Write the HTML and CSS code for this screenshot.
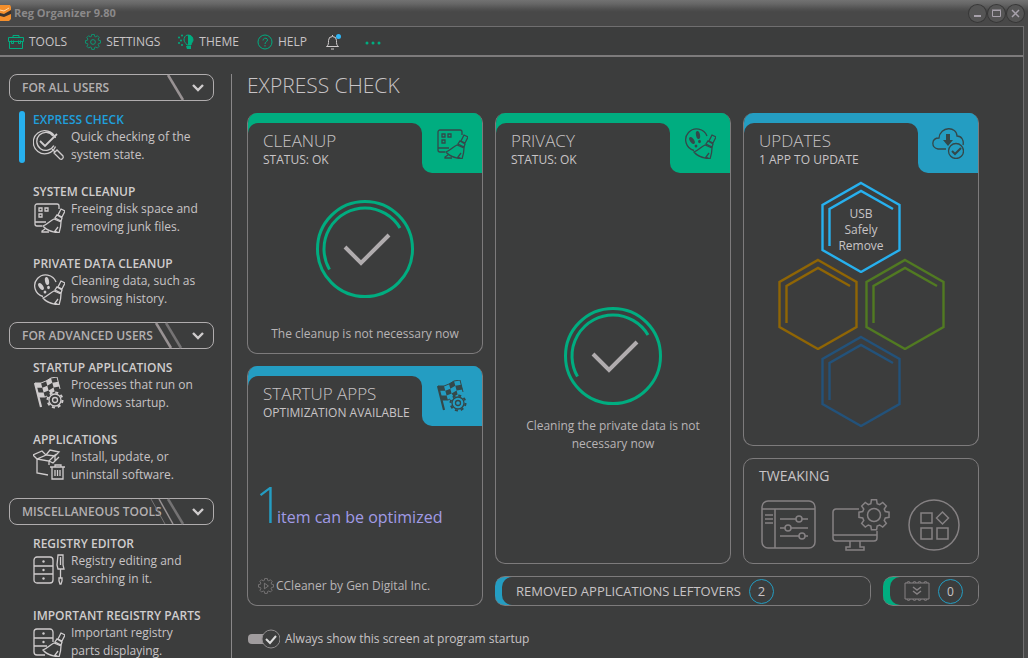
FILE: index.html
```html
<!DOCTYPE html>
<html lang="en">

<head>
    <meta charset="UTF-8">
    <meta name="viewport" content="width=device-width, initial-scale=1.0">
    <title>Reg Organizer 9.80</title>
    <link rel="stylesheet" href="styles.css">
</head>

<body>
    <!-- shared icons -->
    <svg class="sprite" aria-hidden="true">
        <symbol id="broom" viewBox="0 0 32 32">
            <path d="M28 8l4 2-3 6-4-2zM24 14l5 3-1 3-6-3z" />
            <path d="M21 18c-3 1-6 5-11 7 3 4 9 6 16 7 1-3 2-6 2-11zM25 26l-3 4 4 2" />
        </symbol>
        <symbol id="icon-cleanup" viewBox="0 0 32 32">
            <path d="M26 8V5a2 2 0 0 0-2-2H4a2 2 0 0 0-2 2v18a2 2 0 0 0 2 2h5M2 21h11M12 28l-3 2v1h7" />
            <path d="M6 7h3v3H6zM12 7h3v3h-3zM6 13h3v3H6z" />
            <use href="#broom" />
        </symbol>
        <symbol id="icon-privacy" viewBox="0 0 32 32">
            <path d="M23 9A11 11 0 1 0 10 23.500" />
            <g class="fill">
                <ellipse cx="14" cy="8" rx="2" ry="4" transform="rotate(-12 14 8)" />
                <ellipse cx="15.500" cy="14.500" rx="1.400" ry="1.800" />
                <ellipse cx="8" cy="13.500" rx="2" ry="4" transform="rotate(-35 8 13.500)" />
                <ellipse cx="12" cy="19" rx="1.400" ry="1.600" />
            </g>
            <use href="#broom" />
        </symbol>
        <symbol id="gear" viewBox="0 0 20 20">
            <path d="M8.300 1h3.400l.4 2.500 1.700.7 2-1.500 2.400 2.400-1.400 2 .7 1.700 2.500.4v3.400l-2.500.4-.7 1.700 1.400 2-2.400 2.400-2-1.400-1.700.7-.4 2.500H8.300l-.4-2.500-1.700-.7-2 1.400-2.400-2.400 1.400-2-.7-1.700L0 12.600V9.200l2.500-.4.7-1.700-1.400-2 2.400-2.400 2 1.500 1.700-.7z" transform="translate(.6 -.4) scale(.94)" />
        </symbol>
        <symbol id="icon-startup" viewBox="0 0 32 32">
            <path d="M2 6l6 24" stroke-width="2.200" />
            <path d="M2 6h6l5-2 5-3 6-1 3 12M6 20h6l2-1" stroke-width="1" />
            <g class="fill">
                <path d="M2 6h6l1.300 4.700h-6zM13 4l5-3 1.300 4.700-5 3zM9.300 10.700l5-2 1.300 4.700-5 2zM19.300 5.700l6-1 1.300 4.700-6 1zM4.600 15.400h6l1.300 4.600H6zM15.600 13.400l5-3 1 4-4 2z" />
            </g>
            <circle cx="22" cy="23" r="6" />
            <circle cx="22" cy="23" r="7.500" stroke-width="2" stroke-dasharray="3 2.890" />
            <circle cx="22" cy="23" r="2.500" />
        </symbol>
        <symbol id="icon-drawers" viewBox="0 0 32 32">
            <rect x="1" y="4" width="19" height="26" rx="3" />
            <path d="M1 13h19M1 21h19" />
            <g class="fill">
                <circle cx="10.500" cy="8.500" r="1.200" />
                <circle cx="10.500" cy="17" r="1.200" />
                <circle cx="10.500" cy="25.500" r="1.200" />
            </g>
        </symbol>
        <symbol id="hexagon" viewBox="0 0 80 92">
            <path d="M40 2L78.500 24V69L40 91L1.500 69V24Z" />
            <path d="M8.500 65V28L40 10L72 28" />
        </symbol>
        <symbol id="big-check" viewBox="0 0 98 98">
            <circle cx="49" cy="49" r="47.500" stroke-width="3" />
            <path d="M13.500 69.500A41 41 0 0 1 49 8A41 41 0 0 1 84 28" stroke-width="3" />
            <path class="tick" d="M29 47L45 63L73 35" stroke-width="4" />
        </symbol>
        <symbol id="chevron" viewBox="0 0 14 9">
            <path d="M2 2l5 5 5-5" stroke-width="2.400" />
        </symbol>
    </svg>

    <header class="titlebar">
        <svg class="logo" viewBox="0 0 11 16">
            <path d="M0 0h10l1 2v12l-2 2H0z" fill="#f58f2c" stroke="none" />
            <path d="M0 8l4 1 7-4v4l-7 3-4-1z" fill="#3a3330" stroke="none" />
            <path d="M0 5l4 1 5-3" stroke="#ffd9a8" />
        </svg>
        <span class="app-name">Reg Organizer 9.80</span>
        <div class="window-buttons">
            <button aria-label="Minimize"><svg viewBox="0 0 17 17"><path d="M5 11h7" stroke-width="2" /></svg></button>
            <button aria-label="Maximize"><svg viewBox="0 0 17 17"><path d="M4.500 5.500h8v6h-8zM4 5h9" /></svg></button>
            <button aria-label="Close"><svg viewBox="0 0 17 17"><path d="M5 5l7 7M12 5l-7 7" stroke-width="1.500" /></svg></button>
        </div>
    </header>

    <div class="frame">
        <nav class="menu">
            <button>
                <svg viewBox="0 0 16 16"><path d="M5 3.500V1.500h6v2M.5 3.500h15v4H.5zM1.500 7.500v7h13v-7M3.500 6.500v3h2v-3M10.500 6.500v3h2v-3" /></svg>
                TOOLS
            </button>
            <button>
                <svg viewBox="0 0 20 20"><use href="#gear" /><circle cx="10" cy="10" r="3" /></svg>
                SETTINGS
            </button>
            <button>
                <svg viewBox="0 0 16 16">
                    <path d="M10 1c3 0 5 2 5 5 0 2-2 3-2 5H9C8 9 6 8 6 6s1-5 4-5z" />
                    <g class="fill"><path d="M10 1c3 0 5 2 5 5 0 2-2 3-2 5h-3zM8 12h5v3H9z" />
                        <circle cx="4" cy="1.500" r="1" /><circle cx="1" cy="3.500" r="1" /><circle cx="3" cy="6.500" r="1" /><circle cx="1" cy="9" r="1" /><circle cx="4" cy="11" r="1" /></g>
                </svg>
                THEME
            </button>
            <button>
                <svg viewBox="0 0 16 16"><circle cx="8" cy="8" r="7" /><path d="M6 6.500c0-3 4.500-3 4.500-.5C10.500 8 8 7.500 8 10M8 11v1.500" /></svg>
                HELP
            </button>
            <button class="bell" aria-label="Notifications">
                <svg viewBox="0 0 16 16">
                    <path d="M1.500 12.500c2-1 2-3 2-6a4 4 0 0 1 8 0c0 3 0 5 2 6zM6 15h3M7.500 1v1" />
                    <circle cx="13.500" cy="2.500" r="2.500" fill="#2fb6f5" stroke="none" />
                </svg>
            </button>
            <button aria-label="More">
                <svg viewBox="0 0 16 16"><g class="fill"><circle cx="2" cy="9" r="1.500" /><circle cx="8" cy="9" r="1.500" /><circle cx="14" cy="9" r="1.500" /></g></svg>
            </button>
        </nav>

        <div class="workspace">
            <aside class="sidebar">
                <button class="group">
                    <span>FOR ALL USERS</span>
                    <svg class="stripes" viewBox="0 0 32 25"><path d="M13 0L28 25" stroke-width="2.500" /></svg>
                    <svg class="chevron"><use href="#chevron" /></svg>
                </button>
                <a class="item active" href="#">
                    <span class="text">
                        <strong>EXPRESS CHECK</strong>
                        <span class="about">
                            <svg viewBox="0 0 32 32">
                                <path d="M22.500 9A11.500 11.500 0 1 0 22.500 17.500M20 7a9 9 0 1 0 .8 9.500" />
                                <path d="M7 12l5 5L24 5" stroke-width="1.800" />
                                <path d="M19 20l3 3M21 24l3-3 6 6c1 2-1 4-3 3z" />
                            </svg>
                            <span>Quick checking of the system state.</span>
                        </span>
                    </span>
                </a>
                <a class="item" href="#">
                    <span class="text">
                        <strong>SYSTEM CLEANUP</strong>
                        <span class="about">
                            <svg><use href="#icon-cleanup" /></svg>
                            <span>Freeing disk space and removing junk files.</span>
                        </span>
                    </span>
                </a>
                <a class="item" href="#">
                    <span class="text">
                        <strong>PRIVATE DATA CLEANUP</strong>
                        <span class="about">
                            <svg><use href="#icon-privacy" /></svg>
                            <span>Cleaning data, such as browsing history.</span>
                        </span>
                    </span>
                </a>

                <button class="group">
                    <span>FOR ADVANCED USERS</span>
                    <svg class="stripes" viewBox="0 0 32 25"><path d="M1 0L16 25" stroke-width="2.500" /><path class="dim" d="M11 0L26 25" stroke-width="2.500" /></svg>
                    <svg class="chevron"><use href="#chevron" /></svg>
                </button>
                <a class="item" href="#">
                    <span class="text">
                        <strong>STARTUP APPLICATIONS</strong>
                        <span class="about">
                            <svg><use href="#icon-startup" /></svg>
                            <span>Processes that run on Windows startup.</span>
                        </span>
                    </span>
                </a>
                <a class="item" href="#">
                    <span class="text">
                        <strong>APPLICATIONS</strong>
                        <span class="about">
                            <svg viewBox="0 0 32 32">
                                <path d="M4 10l12 2v4M4 10v14l11 2M16 12l6-6v6M4 10L0 6l9-4 4 4zM13 6l4-5 9 2-4 4zM16 12l4 2 6-6" />
                                <path d="M17 18h15M19 18v12h11V18M22 18v-2h6v2M22 21v6M24.500 21v6M27 21v6" />
                            </svg>
                            <span>Install, update, or uninstall software.</span>
                        </span>
                    </span>
                </a>

                <button class="group">
                    <span>MISCELLANEOUS TOOLS</span>
                    <svg class="stripes" viewBox="0 0 32 25"><path class="dim" d="M-4 0L10 25" /><path d="M4 0L18 25" stroke-width="1.500" /><path class="dim" d="M13 0L28 25" stroke-width="2.500" /></svg>
                    <svg class="chevron"><use href="#chevron" /></svg>
                </button>
                <a class="item" href="#">
                    <span class="text">
                        <strong>REGISTRY EDITOR</strong>
                        <span class="about">
                            <svg viewBox="0 0 32 32">
                                <use href="#icon-drawers" />
                                <path d="M25 2h5v10l1 4h-6l-1-4zM27.500 16v9M26 25h3v3l-1 3h-1l-1-3zM27.500 4v8" />
                            </svg>
                            <span>Registry editing and searching in it.</span>
                        </span>
                    </span>
                </a>
                <a class="item" href="#">
                    <span class="text">
                        <strong>IMPORTANT REGISTRY PARTS</strong>
                        <span class="about">
                            <svg viewBox="0 0 32 32">
                                <path d="M20 17V7a3 3 0 0 0-3-3H4a3 3 0 0 0-3 3v20a3 3 0 0 0 3 3h8M1 13h19M1 21h13" />
                                <g class="fill"><circle cx="10.500" cy="8.500" r="1.200" /><circle cx="10.500" cy="17" r="1.200" /></g>
                                <use href="#broom" />
                            </svg>
                            <span>Important registry parts displaying.</span>
                        </span>
                    </span>
                </a>
            </aside>

            <main>
                <h1>EXPRESS CHECK</h1>

                <div class="dashboard">
                    <div class="stack">
                        <section class="card green">
                            <div class="card-head">
                                <div class="card-title">
                                    <h2>CLEANUP</h2>
                                    <p>STATUS: OK</p>
                                </div>
                                <div class="card-icon"><svg><use href="#icon-cleanup" /></svg></div>
                            </div>
                            <div class="card-body result spread">
                                <svg><use href="#big-check" /></svg>
                                <p>The cleanup is not necessary now</p>
                            </div>
                        </section>

                        <section class="card blue">
                            <div class="card-head">
                                <div class="card-title">
                                    <h2>STARTUP APPS</h2>
                                    <p>OPTIMIZATION AVAILABLE</p>
                                </div>
                                <div class="card-icon"><svg><use href="#icon-startup" /></svg></div>
                            </div>
                            <div class="card-body startup">
                                <p class="count"><b>1</b><a href="#">item can be optimized</a></p>
                                <p class="entry">
                                    <svg viewBox="0 0 20 20"><use href="#gear" /><path d="M8 6.500l5 3.500-5 3.500z" /></svg>
                                    CCleaner by Gen Digital Inc.
                                </p>
                            </div>
                        </section>
                    </div>

                    <div class="wide">
                        <section class="card green">
                            <div class="card-head">
                                <div class="card-title">
                                    <h2>PRIVACY</h2>
                                    <p>STATUS: OK</p>
                                </div>
                                <div class="card-icon"><svg><use href="#icon-privacy" /></svg></div>
                            </div>
                            <div class="card-body result centered">
                                <svg><use href="#big-check" /></svg>
                                <p>Cleaning the private data is not necessary now</p>
                            </div>
                        </section>

                        <div class="stack">
                            <section class="card blue updates">
                                <div class="card-head">
                                    <div class="card-title">
                                        <h2>UPDATES</h2>
                                        <p>1 APP TO UPDATE</p>
                                    </div>
                                    <div class="card-icon">
                                        <svg viewBox="0 0 32 32">
                                            <path d="M14 22H6C-1 21-1 11 7 11 8-1 25-1 25 9c5 0 7 5 6 9" />
                                            <g class="fill"><path d="M14 7h4v6h3l-5 6-5-6h3z" /></g>
                                            <circle cx="24" cy="24" r="7.500" />
                                            <path d="M20 24l3 3 6-6" stroke-width="2" />
                                        </svg>
                                    </div>
                                </div>
                                <div class="card-body comb">
                                    <div class="comb-row">
                                        <div class="hex current"><svg><use href="#hexagon" /></svg><span>USB<br>Safely<br>Remove</span></div>
                                    </div>
                                    <div class="comb-row">
                                        <div class="hex amber"><svg><use href="#hexagon" /></svg></div>
                                        <div class="hex olive"><svg><use href="#hexagon" /></svg></div>
                                    </div>
                                    <div class="comb-row">
                                        <div class="hex navy"><svg><use href="#hexagon" /></svg></div>
                                    </div>
                                </div>
                            </section>

                            <section class="card tweaking">
                                <h2>TWEAKING</h2>
                                <div class="tweaks">
                                    <button aria-label="Interface settings">
                                        <svg viewBox="0 0 58 52">
                                            <rect x="3" y="2" width="53" height="47" rx="6" />
                                            <path d="M3 10h53M16 10v39M6 16h8M6 20h8M6 24h8M21 20h16M43 20h6M21 29h5M32 29h17M21 37h19M46 37h3" />
                                            <circle cx="40" cy="20" r="3" /><circle cx="29" cy="29" r="3" /><circle cx="43" cy="37" r="3" />
                                        </svg>
                                    </button>
                                    <button aria-label="System settings">
                                        <svg viewBox="0 0 58 52">
                                            <path d="M27 10H4a3 3 0 0 0-3 3v26a3 3 0 0 0 3 3h38a3 3 0 0 0 3-3v-7M1 36h44M18 42v6h-4v3h18v-3h-4v-6" />
                                            <use href="#gear" x="26" y="0" width="32" height="32" stroke-width="1" />
                                            <circle cx="42" cy="16" r="6.500" />
                                        </svg>
                                    </button>
                                    <button aria-label="Other settings">
                                        <svg viewBox="0 0 58 52">
                                            <circle cx="29" cy="26" r="25" />
                                            <path d="M16 14h11v10H16zM16 29h11v11H16zM32 29h11v11H32zM37.500 13l6 6-6 6-6-6z" />
                                        </svg>
                                    </button>
                                </div>
                            </section>
                        </div>

                        <div class="pills">
                            <button class="pill blue leftovers"><span class="pill-inner">REMOVED APPLICATIONS LEFTOVERS <b>2</b></span></button>
                            <button class="pill green memory" aria-label="Memory">
                                <span class="pill-inner">
                                    <svg viewBox="0 0 26 22">
                                        <path d="M1 3h24v16H1z" />
                                        <path d="M3 3a1.500 1.500 0 0 1 3 0M9 3a1.500 1.500 0 0 1 3 0M14 3a1.500 1.500 0 0 1 3 0M20 3a1.500 1.500 0 0 1 3 0M3 19a1.500 1.500 0 0 0 3 0M9 19a1.500 1.500 0 0 0 3 0M14 19a1.500 1.500 0 0 0 3 0M20 19a1.500 1.500 0 0 0 3 0" />
                                        <path d="M9 7l4 3 4-3M9 11l4 3 4-3" stroke-width="1.500" />
                                    </svg>
                                    <b>0</b>
                                </span>
                            </button>
                        </div>
                    </div>
                </div>

                <label class="startup-toggle">
                    <span class="toggle">
                        <input type="checkbox" checked>
                        <svg viewBox="0 0 32 20">
                            <rect x="0" y="5" width="28" height="10" rx="4" fill="#a09c9e" stroke="none" />
                            <circle cx="23" cy="10" r="9" fill="#3c3d3d" />
                            <path d="M18 10l4 4 6-7" stroke="#dcdcdc" stroke-width="2" />
                        </svg>
                    </span>
                    Always show this screen at program startup
                </label>
            </main>
        </div>
    </div>
</body>

</html>
```
FILE: styles.css
```css
*, *::before, *::after {
    box-sizing: border-box;
}

:root {
    --bg: #3c3d3d;
    --text: #c8c4c6;
    --line: #7d7b7c;
    --green: #00ad80;
    --blue: #249dc2;
    --sky: #27b0ee;
}

body {
    display: flex;
    flex-direction: column;
    height: 100vh;
    margin: 0;
    overflow: hidden;
    font: 12px/18px "Open Sans", "Noto Sans", sans-serif;
    background: #494949;
    color: var(--text);
}

h1, h2, p {
    margin: 0;
    font-weight: 400;
}

button {
    padding: 0;
    border: none;
    background: none;
    color: inherit;
    font: inherit;
    cursor: pointer;
}

a {
    color: inherit;
    text-decoration: none;
}

svg {
    display: block;
    flex: none;
    fill: none;
    stroke: currentColor;
}

.fill {
    fill: currentColor;
    stroke: none;
}

.sprite {
    position: absolute;
    width: 0;
    height: 0;
}

/* title bar */
.titlebar {
    display: flex;
    align-items: center;
    height: 26px;
    padding-right: 4px;
    background: linear-gradient(#727272 0, #666 4px, #505050 9px, #484848 12px);
}

.logo {
    width: 11px;
    height: 16px;
}

.app-name {
    flex: 1;
    margin-left: 3px;
    font-size: 11px;
    font-weight: 700;
    color: #8b898a;
}

.window-buttons {
    display: flex;
    gap: 2px;
}

.window-buttons button {
    width: 17px;
    height: 17px;
    border-radius: 50%;
    background: #555;
    box-shadow: 0 0 0 1px #383838;
    color: #a8a2ac;
}

/* menu */
.frame {
    flex: 1;
    display: flex;
    flex-direction: column;
    min-height: 0;
    margin-right: 4px;
    border-top: 1px solid #706f70;
    border-right: 1px solid #706f70;
    background: var(--bg);
}

.menu {
    display: flex;
    align-items: center;
    gap: 18px;
    height: 30px;
    padding: 1px 0 0 8px;
    border-bottom: 2px solid var(--line);
}

.menu button {
    display: flex;
    align-items: center;
    gap: 5px;
}

.menu svg {
    width: 16px;
    height: 16px;
    color: var(--green);
}

.menu .bell {
    margin-right: 6px;
}

.menu .bell svg {
    color: #d0cccd;
}

.workspace {
    flex: 1;
    display: flex;
    gap: 15px;
    min-height: 0;
    padding-top: 17px;
}

/* sidebar */
.sidebar {
    flex: none;
    width: 232px;
    padding: 0 17px 0 9px;
    border-right: 1px solid #8a8889;
    overflow: hidden;
}

.group {
    display: flex;
    align-items: center;
    width: 100%;
    height: 27px;
    margin-bottom: 10px;
    padding: 0 8px 0 12px;
    border: 1px solid #b0adae;
    border-radius: 8px;
    font-weight: 600;
    color: #b3b0b1;
}

.item + .group {
    margin-top: 15px;
}

.group span {
    flex: 1;
    min-width: 0;
    text-align: left;
    white-space: nowrap;
}

.group .stripes {
    width: 32px;
    height: 25px;
    margin-right: 4px;
    overflow: visible;
    color: #989293;
}

.dim {
    stroke: #757374;
}

.group .chevron {
    width: 14px;
    height: 9px;
    color: #cfcccd;
}

.item {
    display: flex;
    gap: 8px;
    margin-left: 10px;
}

.item + .item {
    margin-top: 20px;
}

.item::before {
    content: "";
    flex: none;
    width: 6px;
    border-radius: 3px;
}

.item.active::before {
    background: var(--sky);
}

.item strong {
    display: block;
    padding-top: 1px;
    font-weight: 600;
    line-height: 16px;
    white-space: nowrap;
    color: #d0cdce;
}

.item.active strong {
    color: #209fdc;
}

.about {
    display: flex;
    gap: 6px;
    width: 170px;
    height: 35px;
}

.about svg {
    width: 32px;
    height: 32px;
    margin-top: 1px;
    color: #cfcccd;
    stroke-width: 1.3px;
}

/* dashboard */
main {
    flex: 1;
    min-width: 0;
    padding-right: 44px;
}

h1 {
    margin-bottom: 17px;
    font-size: 21px;
    font-weight: 300;
    line-height: 22px;
}

.dashboard {
    display: grid;
    grid-template-columns: repeat(3, minmax(0, 1fr));
    gap: 12px;
}

.wide {
    grid-column: span 2;
    display: grid;
    grid-template-columns: 1fr 1fr;
    gap: 12px;
}

.stack {
    display: flex;
    flex-direction: column;
    gap: 12px;
}

.stack > .card {
    flex: 1 1 0;
}

.card {
    display: flex;
    flex-direction: column;
    border: 1px solid var(--line);
    border-radius: 10px;
    overflow: hidden;
}

.green {
    --accent: var(--green);
}

.blue {
    --accent: var(--blue);
}

.card.green, .card.blue {
    border-top: none;
}

.card-head {
    display: flex;
    flex: none;
    height: 60px;
    background: linear-gradient(var(--accent), var(--accent)) no-repeat;
    background-size: 100% 20px;
}

.card-title {
    flex: 1;
    margin-top: 10px;
    padding: 8px 0 0 15px;
    border-radius: 10px 10px 0 0;
    background: var(--bg);
    white-space: nowrap;
}

.card h2 {
    font-size: 17px;
    font-weight: 300;
    line-height: 20px;
}

.card-title p {
    line-height: 18px;
}

.card-icon {
    display: grid;
    place-items: center;
    width: 60px;
    border-radius: 0 0 0 10px;
    background: var(--accent);
    color: #34484a;
}

.card-icon svg {
    width: 32px;
    height: 32px;
    stroke-width: 1.3px;
}

.card-body {
    flex: 1;
    display: flex;
    flex-direction: column;
    align-items: center;
}

.result svg {
    width: 98px;
    height: 98px;
    color: var(--green);
}

.tick {
    stroke: #b0acae;
}

.result p {
    text-align: center;
    color: #b8b4b6;
}

.spread {
    justify-content: space-between;
    gap: 20px;
    padding: 27px 8px 10px;
}

.centered {
    justify-content: center;
    gap: 12px;
    padding: 24px 24px 0;
}

.startup {
    align-items: flex-start;
    justify-content: space-between;
    padding: 48px 10px 10px;
}

.count {
    display: flex;
    align-items: baseline;
    font-size: 16px;
}

.count b {
    width: 19px;
    font-size: 50px;
    font-weight: 300;
    line-height: 60px;
    text-indent: -3px;
    color: var(--blue);
}

.count a {
    color: #a19be6;
}

.entry {
    display: flex;
    align-items: center;
    gap: 2px;
    color: #b8b4b6;
}

.entry svg {
    width: 16px;
    height: 16px;
    color: #858384;
}

/* updates */
.stack > .updates {
    flex: 1 0 auto;
}

.comb {
    padding: 8px 0 18px;
}

.comb-row {
    display: flex;
    gap: 7px;
}

.comb-row + .comb-row {
    margin-top: -15px;
}

.hex {
    display: grid;
    place-items: center;
}

.hex svg, .hex span {
    grid-area: 1 / 1;
}

.hex svg {
    width: 80px;
    height: 92px;
    stroke-width: 2.4px;
}

.hex span {
    padding-top: 6px;
    line-height: 16px;
    text-align: center;
}

.current svg { color: var(--sky); }
.amber svg { color: #8f6505; }
.olive svg { color: #517a22; }
.navy svg { color: #23527a; }

.stack > .tweaking {
    flex: none;
    padding: 8px 15px 12px;
}

.tweaking h2 {
    font-size: 14px;
    font-weight: 400;
    line-height: 18px;
}

.tweaks {
    display: flex;
    justify-content: space-between;
    margin-top: 14px;
}

.tweaks svg {
    width: 58px;
    height: 52px;
    color: #858183;
    stroke-width: 1.5px;
}

/* bottom pills */
.pills {
    grid-column: span 2;
    display: flex;
    gap: 12px;
}

.pill {
    height: 30px;
    padding-left: 7px;
    border: 1px solid var(--line);
    border-left: none;
    border-radius: 10px;
    background: linear-gradient(var(--accent), var(--accent)) no-repeat 0 0 / 20px 100%;
    overflow: hidden;
}

.leftovers {
    flex: 1;
    font-size: 13px;
}

.memory {
    width: 96px;
}

.pill-inner {
    display: flex;
    align-items: center;
    gap: 8px;
    height: 100%;
    padding-left: 14px;
    border-radius: 10px 0 0 10px;
    background: var(--bg);
    white-space: nowrap;
}

.pill-inner svg {
    width: 26px;
    height: 22px;
    color: #858183;
}

.pill b {
    width: 25px;
    height: 25px;
    border: 1px solid var(--blue);
    border-radius: 50%;
    font-weight: 400;
    line-height: 23px;
    text-align: center;
}

/* bottom switch */
.startup-toggle {
    display: inline-flex;
    align-items: center;
    gap: 5px;
    margin: 23px 0 0 1px;
}

.toggle {
    display: grid;
}

.toggle input {
    appearance: none;
    grid-area: 1 / 1;
    width: 32px;
    height: 20px;
    margin: 0;
}

.toggle svg {
    grid-area: 1 / 1;
    width: 32px;
    height: 20px;
    color: #8f8c8d;
    pointer-events: none;
}
```
